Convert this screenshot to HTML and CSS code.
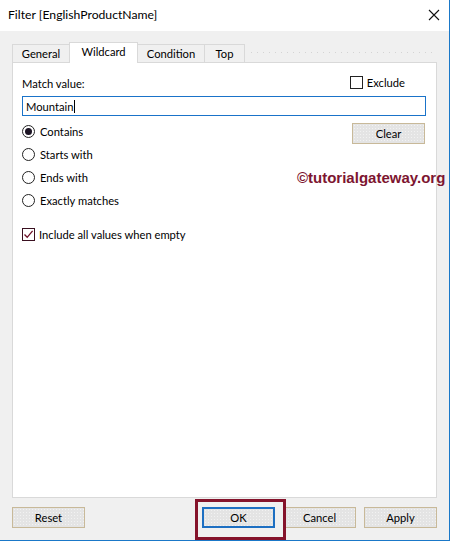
FILE: index.html
```html
<!DOCTYPE html>
<html>
<head>
<meta charset="utf-8">
<link rel="stylesheet" href="styles.css">
</head>
<body>
<div class="window">
  <div class="titlebar">
    <span class="title">Filter [EnglishProductName]</span>
    <svg class="close" width="12" height="12" viewBox="0 0 12 12"><path d="M1 1L11 11M11 1L1 11" stroke="#111" stroke-width="1.1" fill="none"/></svg>
  </div>
  <div class="body">
    <div class="tabs">
      <div class="tab">General</div>
      <div class="tab active">Wildcard</div>
      <div class="tab">Condition</div>
      <div class="tab">Top</div>
      <div class="tab-fill"></div>
    </div>
    <div class="panel">
      <div class="row-head">
        <span class="label">Match value:</span>
        <label class="check exclude"><span class="box"></span><span>Exclude</span></label>
      </div>
      <div class="input"><span>Mountain</span><span class="caret"></span></div>
      <div class="row-options">
        <div class="radios">
          <div class="radio on"><span class="circle"></span><span>Contains</span></div>
          <div class="radio"><span class="circle"></span><span>Starts with</span></div>
          <div class="radio"><span class="circle"></span><span>Ends with</span></div>
          <div class="radio"><span class="circle"></span><span>Exactly matches</span></div>
        </div>
        <div class="btn clear">Clear</div>
      </div>
      <label class="check include">
        <span class="box checked"><svg width="11" height="11" viewBox="0 0 11 11"><path d="M1.5 5.5L4.2 8.3L9.6 1.8" stroke="#6e1028" stroke-width="1.3" fill="none"/></svg></span>
        <span>Include all values when empty</span>
      </label>
    </div>
    <div class="footer">
      <div class="btn">Reset</div>
      <div class="spacer"></div>
      <div class="btn default">OK</div>
      <div class="btn">Cancel</div>
      <div class="btn">Apply</div>
    </div>
  </div>
  <div class="watermark">©tutorialgateway.org</div>
  <div class="highlight"></div>
</div>
</body>
</html>
```
FILE: styles.css
```css
* { box-sizing: border-box; }
html, body { margin: 0; padding: 0; background: #fff; }
body {
  font-family: "Lato", "Noto Sans", sans-serif;
  font-size: 11.2px;
  color: #000;
}
.window {
  position: relative;
  width: 450px;
  height: 541px;
  border-right: 1px solid #1a78c8;
  border-bottom: 1px solid #1a78c8;
  display: flex;
  flex-direction: column;
}
.titlebar {
  height: 31px;
  background: #fff;
  display: flex;
  align-items: center;
  padding-left: 8px;
  padding-right: 9px;
  justify-content: space-between;
}
.title { font-size: 12.2px; margin-top: -2px; }
.close { margin-top: -1px; }
.body {
  flex: 1;
  background: #f0f0f0;
  padding: 11px 12px 0 12px;
  display: flex;
  flex-direction: column;
}
.tabs {
  display: flex;
  align-items: flex-end;
  height: 20px;
  position: relative;
  z-index: 1;
}
.tab {
  height: 18px;
  border: 1px solid #d9d9d9;
  border-bottom: none;
  border-left: none;
  background: #f0f0f0;
  display: flex;
  align-items: center;
  justify-content: center;
  line-height: 1;
  padding-top: 1px;
}
.tab:first-child { border-left: 1px solid #d9d9d9; width: 58px; }
.tab:nth-child(2) { width: 69px; }
.tab:nth-child(3) { width: 67px; }
.tab:nth-child(4) { width: 40px; }
.tab.active {
  height: 21px;
  background: #fff;
  border-left: 1px solid #d9d9d9;
  margin-left: -1px;
  margin-bottom: -1px;
  padding-bottom: 3px;
}
.tab-fill {
  flex: 1;
  align-self: center;
  height: 1px;
  margin-left: 6px;
  background: repeating-linear-gradient(90deg, #d4d4d4 0 1px, transparent 1px 6px);
}
.panel {
  height: 436px;
  background: #fff;
  border: 1px solid #d9d9d9;
  padding: 10px 10px 0 9px;
}
.row-head {
  display: flex;
  justify-content: space-between;
  align-items: center;
  height: 19px;
}
.label { margin-top: 1px; }
.check {
  display: flex;
  align-items: center;
  gap: 4px;
}
.box {
  width: 13px;
  height: 13px;
  border: 1px solid #222;
  background: #fff;
  display: flex;
  align-items: center;
  justify-content: center;
}
.box.checked { border-color: #3a1020; }
.exclude { margin-right: 21px; }
.input {
  margin-top: 4px;
  height: 20px;
  border: 1px solid #1a73c9;
  display: flex;
  align-items: center;
  padding-left: 3px;
}
.caret {
  width: 1px;
  height: 13px;
  background: #000;
  margin-left: 1px;
}
.row-options {
  margin-top: 7px;
  display: flex;
  justify-content: space-between;
  align-items: flex-start;
}
.radios {
  display: flex;
  flex-direction: column;
  gap: 10px;
  padding-top: 2px;
}
.radio {
  display: flex;
  align-items: center;
  gap: 5px;
  height: 13px;
}
.circle {
  width: 13px;
  height: 13px;
  border: 1px solid #222;
  border-radius: 50%;
  background: #fff;
  display: flex;
  align-items: center;
  justify-content: center;
}
.radio.on .circle::after {
  content: "";
  width: 7px;
  height: 7px;
  border-radius: 50%;
  background: #1c1424;
}
.btn {
  width: 73px;
  height: 21px;
  border: 1px solid #c8b999;
  background-color: #e4e4e4;
  background-image: radial-gradient(circle, #f2f2f2 0.6px, transparent 0.9px);
  background-size: 3px 3px;
  display: flex;
  align-items: center;
  justify-content: center;
}
.clear { margin-right: 1px; }
.include { margin-top: 21px; }
.footer {
  display: flex;
  padding-top: 9px;
  gap: 8px;
}
.spacer { flex: 1; }
.btn.default {
  border: 2px solid #1d6fc2;
}
.watermark {
  position: absolute;
  left: 297px;
  top: 169px;
  font-family: "Liberation Sans", sans-serif;
  font-weight: bold;
  font-size: 15px;
  color: #7d1530;
}
.highlight {
  position: absolute;
  left: 195px;
  top: 499px;
  width: 91px;
  height: 41px;
  border: 3px solid #85132b;
}
```
